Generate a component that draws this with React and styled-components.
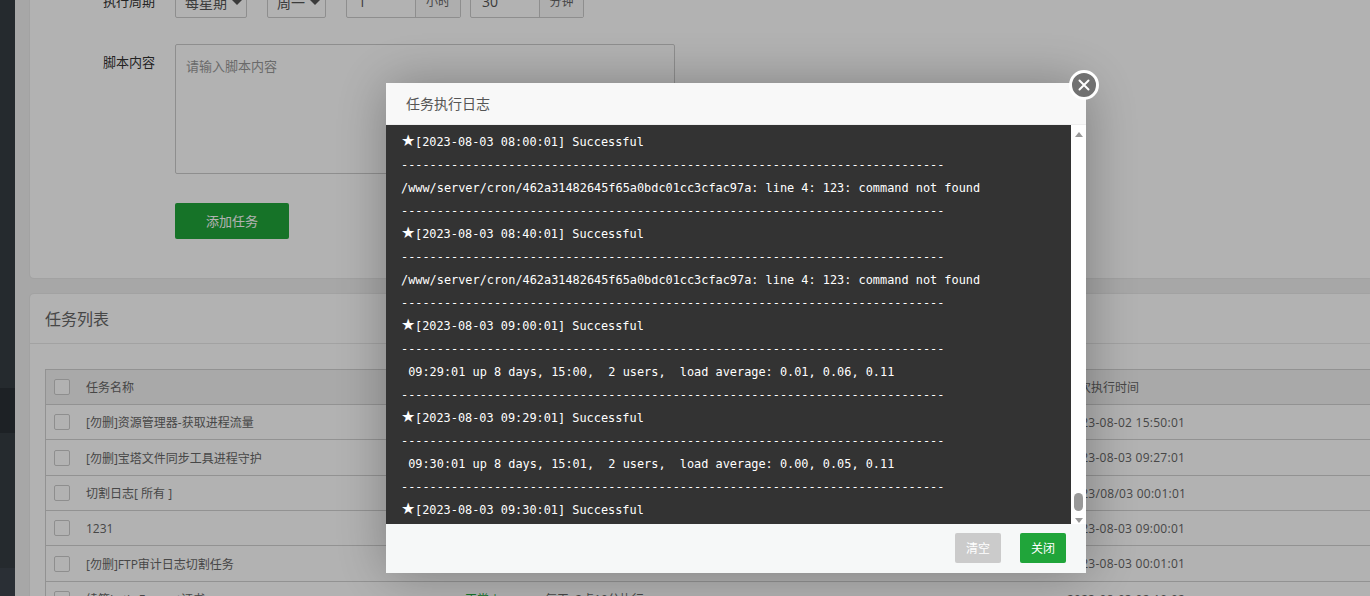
import React from "react";
import styled, { createGlobalStyle } from "styled-components";

const Global = createGlobalStyle`
  html, body { margin: 0; padding: 0; height: 596px; overflow: hidden; background: #f0f0f0; }
  body { font-family: "Open Sans", "Noto Sans CJK SC", sans-serif; font-size: 12px; color: #555; }
  * { box-sizing: border-box; }
`;

const Page = styled.div`
  display: flex;
  width: 1370px;
  height: 596px;
  overflow: hidden;
`;
const Sidebar = styled.aside`
  width: 15px;
  flex: none;
  height: 596px;
  background: #363d43;
  display: flex;
  flex-direction: column;
`;
const SideItem = styled.div`
  flex: none;
  height: ${p => p.$h}px;
  background: ${p => p.$bg};
`;
const Main = styled.main`
  flex: 1;
  min-width: 0;
  padding: 0 0 0 15px;
  margin-top: -32px;
`;
const Card = styled.section`
  background: #fff;
  border-radius: 4px 0 0 4px;
  box-shadow: 0 0 2px rgba(0, 0, 0, 0.12);
  margin-bottom: 16px;
`;
const FormCard = styled(Card)`
  height: 310px;
  padding: 18px 0 0 72px;
`;
const FormRow = styled.div`
  display: flex;
  height: 32px;
`;
const FormLabel = styled.label`
  width: 73px;
  flex: none;
  padding-left: 1px;
  color: #333;
  font-size: 13px;
  line-height: 30px;
`;
const Select = styled.div`
  flex: none;
  width: ${p => p.$w}px;
  height: 32px;
  margin-right: 20px;
  border: 1px solid #ccc;
  border-radius: 2px;
  padding-left: 9px;
  display: flex;
  align-items: center;
  gap: 4px;
  color: #555;
  font-size: 14px;
  &::after {
    content: "";
    border-left: 6px solid transparent;
    border-right: 6px solid transparent;
    border-top: 6px solid #555;
  }
`;
const InputGroup = styled.div`
  display: flex;
  flex: none;
  height: 32px;
  width: ${p => p.$w}px;
  margin-right: ${p => p.$gap}px;
  border: 1px solid #ccc;
  border-radius: 2px;
`;
const InputValue = styled.div`
  width: 69px;
  flex: none;
  border-right: 1px solid #ccc;
  padding-left: 11px;
  line-height: 30px;
  font-size: 14px;
  color: #555;
`;
const InputUnit = styled.div`
  flex: 1;
  background: #fafafa;
  text-align: center;
  line-height: 30px;
  color: #666;
`;
const ContentRow = styled.div`
  display: flex;
  margin-top: 26px;
`;
const Label2 = styled(FormLabel)`
  line-height: 18px;
  padding-top: 9px;
`;
const Textarea = styled.div`
  width: 500px;
  height: 130px;
  border: 1px solid #ccc;
  border-radius: 2px;
  padding: 12px 10px;
  color: #999;
  font-size: 13px;
  line-height: 18px;
`;
const AddButton = styled.button`
  display: block;
  margin: 29px 0 0 73px;
  width: 114px;
  height: 36px;
  padding: 0 0 2px;
  border: none;
  border-radius: 2px;
  background: #20a53a;
  color: #fff;
  font-family: inherit;
  font-size: 13px;
`;
const CardTitle = styled.h2`
  margin: 0;
  height: 50px;
  padding: 0 15px;
  font-size: 16px;
  font-weight: 400;
  line-height: 50px;
  color: #666;
  border-bottom: 1px solid #e8e8e8;
`;
const TableWrap = styled.div`
  padding: 25px 0 0 15px;
`;
const Row = styled.div`
  display: grid;
  grid-template-columns: 40px 379px 80px 522px 1fr;
  align-items: center;
  height: ${p => p.$h || 35}px;
  border-bottom: 1px solid #d2d2d2;
  border-left: 1px solid #d2d2d2;
  background: ${p => (p.$head ? "#f2f2f2" : "#fff")};
  color: #666;
  white-space: nowrap;
  &:first-child { border-top: 1px solid #d2d2d2; height: 36px; }
`;
const Check = styled.span`
  display: block;
  width: 16px;
  height: 16px;
  margin-left: 8px;
  border: 1px solid #ccc;
  border-radius: 2px;
  background: #fff;
`;
const Cell = styled.span`
  font-size: 12px;
  color: ${p => p.$color || "#666"};
`;
const DateCell = styled(Cell)`
  letter-spacing: 0.26px;
`;

const Overlay = styled.div`
  position: fixed;
  inset: 0;
  background: rgba(0, 0, 0, 0.3);
`;
const Dialog = styled.div`
  position: fixed;
  left: 386px;
  top: 83px;
  width: 700px;
  height: 490px;
  display: flex;
  flex-direction: column;
  background: #fff;
  box-shadow: 1px 1px 50px rgba(0, 0, 0, 0.3);
`;
const DialogTitle = styled.div`
  height: 42px;
  flex: none;
  padding-left: 20px;
  background: #f8f8f8;
  border-bottom: 1px solid #eee;
  line-height: 42px;
  font-size: 14px;
  color: #555;
`;
const CloseButton = styled.button`
  position: absolute;
  right: -13px;
  top: -13px;
  width: 30px;
  height: 30px;
  padding: 0;
  border: 3px solid #fff;
  border-radius: 50%;
  background: #717171;
  display: flex;
  align-items: center;
  justify-content: center;
`;
const DialogBody = styled.div`
  flex: 1;
  min-height: 0;
  display: flex;
`;
const Log = styled.pre`
  flex: 1;
  margin: 0;
  padding: 6px 15px 0;
  background: #333;
  color: #fff;
  overflow: hidden;
  font-family: "DejaVu Sans Mono", "Liberation Mono", monospace;
  font-size: 11.88px;
  line-height: 23px;
`;
const Star = styled.span`
  display: inline-block;
  width: 14px;
  height: 12px;
  font-size: 16px;
  line-height: 12px;
  font-family: "DejaVu Sans", sans-serif;
  overflow: visible;
`;
const ScrollTrack = styled.div`
  position: relative;
  width: 15px;
  flex: none;
  background: #fff;
  display: flex;
  flex-direction: column;
  justify-content: space-between;
  align-items: center;
  padding: 7px 0 1px;
`;
const ScrollArrow = styled.span`
  width: 0;
  height: 0;
  border-left: 4.5px solid transparent;
  border-right: 4.5px solid transparent;
  ${p => (p.$up ? "border-bottom: 5px solid #999;" : "border-top: 5px solid #999;")}
`;
const ScrollThumb = styled.span`
  position: absolute;
  left: 3px;
  top: 368px;
  width: 9px;
  height: 18px;
  border-radius: 5px;
  background: #999;
`;
const DialogFooter = styled.div`
  height: 49px;
  flex: none;
  display: flex;
  justify-content: flex-end;
  align-items: center;
  gap: 19px;
  padding: 0 20px 1px;
  background: #f6f8f8;
`;
const FootButton = styled.button`
  width: 46px;
  height: 30px;
  padding: 0;
  border: none;
  border-radius: 2px;
  background: ${p => p.$bg};
  color: #fff;
  font-family: inherit;
  font-size: 12px;
`;

const dash = "-".repeat(76);
const log = [
  ["[2023-08-03 08:00:01] Successful", "/www/server/cron/462a31482645f65a0bdc01cc3cfac97a: line 4: 123: command not found"],
  ["[2023-08-03 08:40:01] Successful", "/www/server/cron/462a31482645f65a0bdc01cc3cfac97a: line 4: 123: command not found"],
  ["[2023-08-03 09:00:01] Successful", " 09:29:01 up 8 days, 15:00,  2 users,  load average: 0.01, 0.06, 0.11"],
  ["[2023-08-03 09:29:01] Successful", " 09:30:01 up 8 days, 15:01,  2 users,  load average: 0.00, 0.05, 0.11"],
];
const rows = [
  ["[勿删]资源管理器-获取进程流量", "2023-08-02 15:50:01", 35],
  ["[勿删]宝塔文件同步工具进程守护", "2023-08-03 09:27:01", 36],
  ["切割日志[ 所有 ]", "2023/08/03 00:01:01", 35],
  ["1231", "2023-08-03 09:00:01", 35],
  ["[勿删]FTP审计日志切割任务", "2023-08-03 00:01:01", 36],
];

export default function App() {
  return (
    <>
      <Global />
      <Page>
        <Sidebar>
          <SideItem $h={388} $bg="#363d43" />
          <SideItem $h={45} $bg="#2a3035" />
          <SideItem $h={135} $bg="#363d43" />
          <SideItem $h={28} $bg="#3d444d" />
        </Sidebar>
        <Main>
          <FormCard>
            <FormRow>
              <FormLabel>执行周期</FormLabel>
              <Select $w={72}>每星期</Select>
              <Select $w={59}>周一</Select>
              <InputGroup $w={115} $gap={9}>
                <InputValue>1</InputValue>
                <InputUnit>小时</InputUnit>
              </InputGroup>
              <InputGroup $w={114} $gap={0}>
                <InputValue>30</InputValue>
                <InputUnit>分钟</InputUnit>
              </InputGroup>
            </FormRow>
            <ContentRow>
              <Label2>脚本内容</Label2>
              <Textarea>请输入脚本内容</Textarea>
            </ContentRow>
            <AddButton>添加任务</AddButton>
          </FormCard>
          <Card>
            <CardTitle>任务列表</CardTitle>
            <TableWrap>
              <Row $head>
                <Check />
                <Cell>任务名称</Cell>
                <Cell />
                <Cell />
                <Cell>上次执行时间</Cell>
              </Row>
              {rows.map(r => (
                <Row key={r[0]} $h={r[2]}>
                  <Check />
                  <Cell>{r[0]}</Cell>
                  <Cell />
                  <Cell />
                  <DateCell>{r[1]}</DateCell>
                </Row>
              ))}
              <Row>
                <Check />
                <Cell>续签Let's Encrypt证书</Cell>
                <Cell $color="#20a53a">正常↓</Cell>
                <Cell>每天, 2点10分执行</Cell>
                <DateCell>2023-08-03 02:10:02</DateCell>
              </Row>
            </TableWrap>
          </Card>
        </Main>
      </Page>
      <Overlay />
      <Dialog>
        <DialogTitle>任务执行日志</DialogTitle>
        <CloseButton aria-label="关闭">
          <svg width="14" height="14" viewBox="0 0 14 14">
            <path d="M2.5 2.5l9 9M11.5 2.5l-9 9" stroke="#fff" strokeWidth="2" strokeLinecap="round" />
          </svg>
        </CloseButton>
        <DialogBody>
          <Log>
            {log.map(([a, b], i) => (
              <React.Fragment key={i}>
                <Star>★</Star>{a + "\n" + dash + "\n" + b + "\n" + dash + "\n"}
              </React.Fragment>
            ))}
            <Star>★</Star>[2023-08-03 09:30:01] Successful
          </Log>
          <ScrollTrack>
            <ScrollArrow $up />
            <ScrollThumb />
            <ScrollArrow />
          </ScrollTrack>
        </DialogBody>
        <DialogFooter>
          <FootButton $bg="#cbcbcb">清空</FootButton>
          <FootButton $bg="#20a53a">关闭</FootButton>
        </DialogFooter>
      </Dialog>
    </>
  );
}
